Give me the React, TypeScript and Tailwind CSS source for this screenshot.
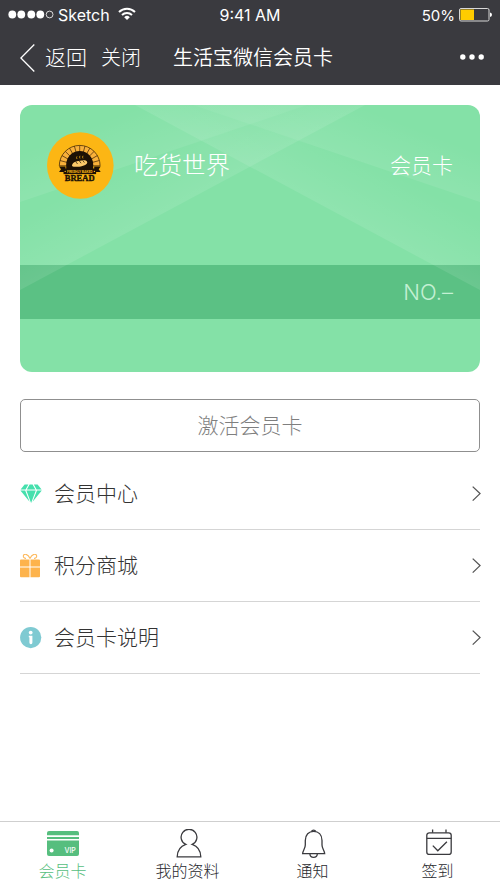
import React from 'react';

const StatusBar: React.FC = () => (
  <div className="relative flex h-[30px] items-center justify-between px-2 font-['Inter',sans-serif] text-base leading-none">
    <div className="flex items-center gap-1">
      <svg className="h-3 w-[46px]" viewBox="0 0 46 12" fill="#fff">
        {[4, 13, 23, 32].map((cx) => (
          <circle key={cx} cx={cx + 0.3} cy="5.5" r="3.9" />
        ))}
        <circle cx="41.6" cy="5.5" r="3.4" fill="none" stroke="#fff" strokeWidth="0.8" />
      </svg>
      <span>Sketch</span>
      <svg className="ml-1 h-4 w-[18px]" viewBox="0 0 18 16" fill="none" stroke="#fff" strokeWidth="2">
        <path d="M1 5 a11.5 11.5 0 0 1 16 0" />
        <path d="M4 8 a7.2 7.2 0 0 1 10 0" />
        <path d="M9 13 L6.2 10.2 a4 4 0 0 1 5.6 0 Z" fill="#fff" stroke="none" />
      </svg>
    </div>
    <span className="absolute inset-x-0 text-center">9:41 AM</span>
    <div className="flex items-center gap-1">
      <span className="text-[15px]">50%</span>
      <svg className="h-[14px] w-[33px]" viewBox="0 0 33 14">
        <rect x="0.5" y="0.5" width="29.5" height="12.5" rx="1.5" fill="none" stroke="#d8d8d8" />
        <rect x="1.5" y="1.5" width="13.5" height="10.5" fill="#ffcc00" />
        <path d="M31 4.5 q2 0.5 2 2.3 t-2 2.3 Z" fill="#fff" />
      </svg>
    </div>
  </div>
);

const NavBar: React.FC = () => (
  <nav className="flex h-[55px] items-center px-5">
    <button className="flex items-center gap-[10px] text-[21px] font-light">
      <svg className="h-7 w-[15px]" viewBox="0 0 15 28" fill="none" stroke="#fff" strokeWidth="1.3">
        <path d="M14.3 0.5 L0.9 14 L14.3 27.5" />
      </svg>
      返回
    </button>
    <button className="ml-[14px] text-xl font-light">关闭</button>
    <h1 className="ml-8 text-xl font-[350]">生活宝微信会员卡</h1>
    <button className="-mr-1 ml-auto" aria-label="更多">
      <svg className="h-2 w-6" viewBox="0 0 24 8" fill="#fff">
        <circle cx="2.8" cy="3" r="2.7" />
        <circle cx="12" cy="3" r="2.7" />
        <circle cx="21.2" cy="3" r="2.7" />
      </svg>
    </button>
  </nav>
);

const BreadLogo: React.FC = () => (
  <svg className="size-[67px]" viewBox="0 0 67 67">
    <circle cx="33.3" cy="33.5" r="33.3" fill="#fcb614" />
    {/* Brick arch */}
    <path d="M12.3 33.8 a20.4 20.4 0 0 1 40.8 0 Z" fill="#f9b13a" stroke="#4a2d08" strokeWidth="0.8" />
    {[15, 30, 45, 60, 75, 90, 105, 120, 135, 150, 165].map((deg) => (
      <path key={deg} d="M20 33.8 H12.3" transform={`rotate(${deg} 32.7 33.8)`} stroke="#4a2d08" strokeWidth="0.7" />
    ))}
    <path d="M19.2 38 V32.5 a13.5 13.5 0 0 1 27 0 V38 Z" fill="#1d1105" />
    {/* Loaf and steam */}
    <path d="M25 33.2 c1 -3.5 5.5 -4 8 -4.4 c2.5 -0.8 7.3 -1 7.3 1.6 c-0.4 2.6 -5.5 4.1 -9.7 4.3 c-3 0.2 -5.8 0.3 -5.6 -1.5 Z" fill="#fcc96a" />
    <path d="M28.8 29.8 l1.8 2.2 M32.3 29 l1.8 2.2 M35.8 28.6 l1.6 2" stroke="#1d1105" strokeWidth="0.7" />
    <path d="M30 27 q-1 -1.3 0 -2.6 M33 26.4 q-1 -1.3 0 -2.6 M36 26.4 q-1 -1.3 0 -2.6" fill="none" stroke="#fcb614" strokeWidth="0.7" />
    {/* Ribbon */}
    <path d="M12 34.5 H18.5 V40 H12 L14 37.3 Z M53.7 34.5 H47.2 V40 H53.7 L51.7 37.3 Z" fill="#1d1105" />
    <rect x="16.5" y="36.5" width="32.6" height="5.6" fill="#1d1105" />
    <circle cx="18.2" cy="39.4" r="0.7" fill="#fcb614" />
    <circle cx="47.4" cy="39.4" r="0.7" fill="#fcb614" />
    <text x="32.8" y="40.6" textAnchor="middle" fontSize="3.4" fontWeight="700" fill="#fcb614" fontFamily="Roboto, sans-serif">
      FRESHLY BAKED
    </text>
    <text x="32.7" y="48.9" textAnchor="middle" fontSize="8.5" fontWeight="700" fill="#1d1105" stroke="#1d1105" strokeWidth="0.4" fontFamily="'Liberation Serif', serif">
      BREAD
    </text>
  </svg>
);

const CardRays: React.FC = () => (
  <svg className="pointer-events-none absolute inset-0 size-full" viewBox="0 0 460 267" preserveAspectRatio="none">
    <defs>
      <linearGradient id="ray-low" gradientUnits="userSpaceOnUse" x1="87" y1="67" x2="118" y2="126">
        <stop offset="0" stopColor="#fff" stopOpacity="0" />
        <stop offset="1" stopColor="#fff" stopOpacity="0.1" />
      </linearGradient>
      <linearGradient id="ray-high" gradientUnits="userSpaceOnUse" x1="125" y1="-1" x2="144" y2="48">
        <stop offset="0" stopColor="#fff" stopOpacity="0" />
        <stop offset="1" stopColor="#fff" stopOpacity="0.09" />
      </linearGradient>
      <g id="ray-pair">
        <path d="M0 97 L287 0 H345 L0 185 Z" fill="url(#ray-low)" />
        <path d="M0 0 H287 L0 97 Z" fill="url(#ray-high)" />
      </g>
    </defs>
    <use href="#ray-pair" />
    <use href="#ray-pair" transform="translate(460 0) scale(-1 1)" />
  </svg>
);

const MemberCard: React.FC = () => (
  <section className="relative overflow-hidden rounded-xl bg-[#84e1a7] pb-[53px] text-white">
    <div className="flex h-40 items-start px-[27px] pt-[27px]">
      <div className="relative z-10 flex flex-1 items-center">
        <BreadLogo />
        <h2 className="ml-5 text-2xl font-light">吃货世界</h2>
        <span className="ml-auto text-[21px] font-light">会员卡</span>
      </div>
    </div>
    <div className="flex h-[54px] items-center justify-end bg-[#5bc184] px-[27px]">
      <span className="text-[22px] font-light text-[#c3f0d3]">NO.–</span>
    </div>
    <CardRays />
  </section>
);

const DiamondIcon: React.FC = () => (
  <svg className="h-[22px] w-[22px]" viewBox="0 0 22 22" fill="#45e0ad">
    <path d="M4.6 1.4 H8.4 L5.6 6.4 H0.6 Z M9.6 1.4 H12.6 L15.4 6.4 H6.8 Z M13.8 1.4 H17.6 L21.6 6.4 H16.6 Z" />
    <path d="M0.4 7.4 H5.2 L9.6 18.8 Z M6.4 7.4 H15.8 L11.1 20 Z M17 7.4 H21.8 L12.6 18.8 Z" />
  </svg>
);

const GiftIcon: React.FC = () => (
  <svg className="h-6 w-[22px]" viewBox="0 0 22 24">
    <path d="M10 4.5 C8 -0.2 4 -0.8 3.4 1.6 C3 3.4 4.5 4.4 6 4.4 M10 4.5 C12 -0.2 16 -0.8 16.6 1.6 C17 3.4 15.5 4.4 14 4.4" fill="none" stroke="#fdb95c" strokeWidth="1.1" />
    <path d="M1 5.4 H9.5 V12.4 H0 V6.4 Q0 5.4 1 5.4 Z M10.5 5.4 H19 Q20 5.4 20 6.4 V12.4 H10.5 Z M0 13.4 H9.5 V23.2 H1 Q0 23.2 0 22.2 Z M10.5 13.4 H20 V22.2 Q20 23.2 19 23.2 H10.5 Z" fill="#fdb34c" />
  </svg>
);

const InfoIcon: React.FC = () => (
  <svg className="h-[22px] w-[22px]" viewBox="0 0 22 22">
    <circle cx="10.7" cy="10.6" r="10.6" fill="#7fcad2" />
    <circle cx="10.7" cy="5.6" r="1.9" fill="#fff" />
    <path d="M8.8 8.8 H12.4 V15.4 Q12.4 17.2 10.9 17.2 T9.4 15.4 V10.2 H8.8 Z" fill="#fff" />
  </svg>
);

const links = [
  { label: '会员中心', icon: <DiamondIcon /> },
  { label: '积分商城', icon: <GiftIcon /> },
  { label: '会员卡说明', icon: <InfoIcon /> },
];

const CardIcon: React.FC = () => (
  <svg className="h-[30px] w-8" viewBox="0 0 32 30">
    <path d="M2 2 H30 Q32 2 32 4 V6.2 H0 V4 Q0 2 2 2 Z M0 8 H32 V10 H0 Z M0 11.6 H32 V25 Q32 27 30 27 H2 Q0 27 0 25 Z" fill="#56be7e" />
    <circle cx="4.6" cy="21.6" r="2" fill="#fff" />
    <text x="17.5" y="24.4" fontSize="7" fontWeight="500" fill="#fff" fontFamily="Inter, sans-serif">VIP</text>
  </svg>
);

const UserIcon: React.FC = () => (
  <svg className="h-[30px] w-8" viewBox="0 0 32 30" fill="none" stroke="#3a3a3e" strokeWidth="1.3">
    <path d="M13.8 15.4 A7.9 7.9 0 1 1 20.2 15.4 C25.6 17.2 28.6 21.8 28.8 27.8 H5.2 C5.4 21.8 8.4 17.2 13.8 15.4 Z" />
  </svg>
);

const BellIcon: React.FC = () => (
  <svg className="h-[30px] w-8" viewBox="0 0 32 30" fill="none" stroke="#3a3a3e" strokeWidth="1.3">
    <path d="M8.3 11.5 C8.3 5.6 11.8 2.3 16.6 2.3 C21.4 2.3 25 5.6 25 11.5 V16 C25 19.5 27.5 21.6 27.7 24.7 H5.6 C5.8 21.6 8.3 19.5 8.3 16 Z" />
    <path d="M14.4 2.5 A2.4 2.4 0 0 1 18.8 2.5 M12.9 25 C13.2 29.4 20 29.4 20.3 25" />
  </svg>
);

const CheckInIcon: React.FC = () => (
  <svg className="h-[30px] w-8" viewBox="0 0 32 30" fill="none" stroke="#3a3a3e" strokeWidth="1.3">
    <rect x="4.8" y="3.8" width="24.4" height="21.6" rx="2.5" />
    <path d="M4.8 9.4 H29.2 M10.6 0.4 V3.8 M24 0.4 V3.8 M10.8 16.6 L15.8 21.8 L24.9 12.8" />
  </svg>
);

const tabs = [
  { label: '会员卡', icon: <CardIcon />, color: 'text-[#56be7e]' },
  { label: '我的资料', icon: <UserIcon />, color: 'text-[#2a2a2e]' },
  { label: '通知', icon: <BellIcon />, color: 'text-[#2a2a2e]' },
  { label: '签到', icon: <CheckInIcon />, color: 'text-[#2a2a2e]' },
];

const App: React.FC = () => {
  return (
    <div className="flex min-h-screen flex-col bg-white font-['Inter','Noto_Sans_CJK_SC',sans-serif]">
      <header className="bg-[#3a3a3f] text-white">
        <StatusBar />
        <NavBar />
      </header>

      <main className="flex-1 px-5 pt-5">
        <MemberCard />

        <button className="mt-[27px] h-[53px] w-full rounded-[5px] border border-[#8f8f8f] text-[21px] font-light text-[#7f7f7f]">
          激活会员卡
        </button>

        <ul className="mt-[6px]">
          {links.map((link) => (
            <li key={link.label} className="border-b border-[#d5d5d5]">
              <a href="#" className="flex h-[71px] items-center text-[21px] font-light text-[#333]">
                {link.icon}
                <span className="ml-3">{link.label}</span>
                <svg className="-mr-px ml-auto h-4 w-[9px]" viewBox="0 0 9 16" fill="none" stroke="#555" strokeWidth="1.3">
                  <path d="M0.7 0.6 L8 7.6 L0.7 14.6" />
                </svg>
              </a>
            </li>
          ))}
        </ul>
      </main>

      <footer className="grid h-[68px] grid-cols-4 border-t border-[#cfcfcf]">
        {tabs.map((tab) => (
          <button key={tab.label} className={`flex flex-col items-center pt-[7px] text-base leading-6 font-light ${tab.color}`}>
            {tab.icon}
            <span>{tab.label}</span>
          </button>
        ))}
      </footer>
    </div>
  );
};

export default App;
